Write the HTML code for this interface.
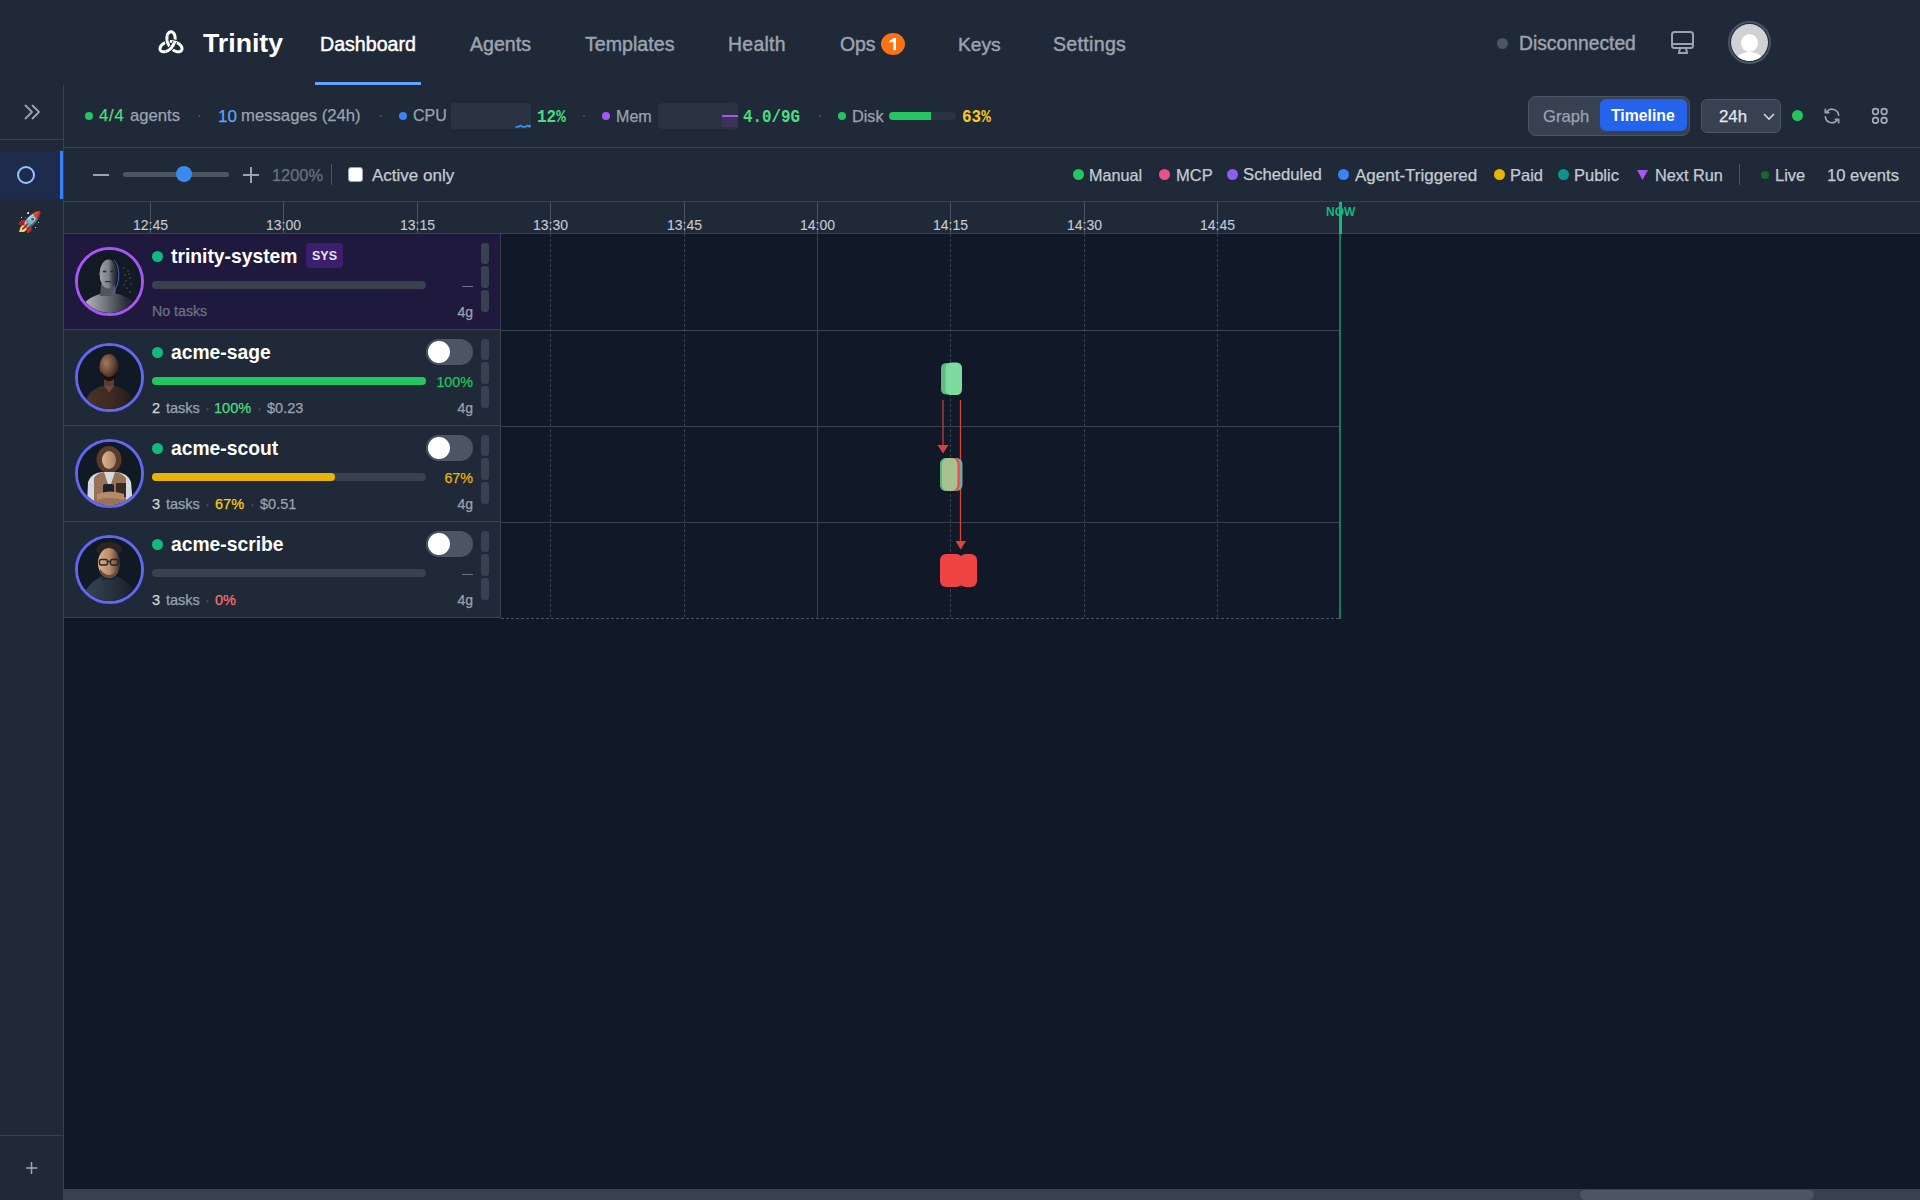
<!DOCTYPE html>
<html><head><meta charset="utf-8">
<style>
*{margin:0;padding:0;box-sizing:border-box}
html,body{width:1920px;height:1200px;overflow:hidden;background:#111827;font-family:"Liberation Sans",sans-serif;color:#d1d5db}
.a{position:absolute}
.t{position:absolute;white-space:nowrap;line-height:1;-webkit-text-stroke:0.25px currentColor}
.t[style*="font-weight:bold"]{-webkit-text-stroke:0}
.dot{position:absolute;border-radius:50%}
</style></head><body>

<!-- HEADER -->
<div class="a" style="left:0;top:0;width:1920px;height:85px;background:#1f2937"></div>
<!-- logo -->
<svg class="a" style="left:150px;top:26px" width="42" height="32" viewBox="0 0 42 32"><g fill="none" stroke-linejoin="round"><path d="M21.00 15.60 L21.68 15.61 L22.37 15.66 L23.04 15.73 L23.71 15.83 L24.37 15.96 L25.01 16.12 L25.64 16.31 L26.25 16.52 L26.84 16.76 L27.40 17.02 L27.94 17.30 L28.46 17.60 L28.94 17.93 L29.40 18.26 L29.82 18.62 L30.20 18.98 L30.56 19.36 L30.87 19.74 L31.15 20.13 L31.39 20.52 L31.59 20.92 L31.75 21.32 L31.87 21.71 L31.95 22.09 L31.99 22.47 L32.00 22.84 L31.96 23.20 L31.88 23.54 L31.76 23.87 L31.61 24.17 L31.42 24.46 L31.20 24.72 L30.94 24.96 L30.65 25.17 L30.33 25.35 L29.98 25.51 L29.61 25.63 L29.21 25.72 L28.78 25.78 L28.34 25.81 L27.88 25.80 L27.40 25.75 L26.91 25.67 L26.41 25.55 L25.90 25.40 L25.39 25.21 L24.87 24.98 L24.35 24.73 L23.83 24.43 L23.31 24.10 L22.80 23.74 L22.30 23.35 L21.82 22.93 L21.34 22.48 L20.88 22.00 L20.44 21.50 L20.01 20.97 L19.61 20.42 L19.23 19.86 L18.88 19.27 L18.55 18.67 L18.25 18.06 L17.97 17.44 L17.73 16.81 L17.51 16.17 L17.33 15.54 L17.18 14.90 L17.06 14.26 L16.97 13.64 L16.91 13.02 L16.88 12.41 L16.89 11.81 L16.92 11.23 L16.99 10.67 L17.08 10.13 L17.21 9.61 L17.36 9.12 L17.53 8.65 L17.73 8.21 L17.95 7.81 L18.19 7.44 L18.46 7.10 L18.73 6.80 L19.03 6.54 L19.34 6.31 L19.66 6.13 L19.98 5.98 L20.32 5.88 L20.66 5.81 L21.00 5.79 L21.34 5.81 L21.68 5.88 L22.02 5.98 L22.34 6.13 L22.66 6.31 L22.97 6.54 L23.27 6.80 L23.54 7.10 L23.81 7.44 L24.05 7.81 L24.27 8.21 L24.47 8.65 L24.64 9.12 L24.79 9.61 L24.92 10.13 L25.01 10.67 L25.08 11.23 L25.11 11.81 L25.12 12.41 L25.09 13.02 L25.03 13.64 L24.94 14.26 L24.82 14.90 L24.67 15.54 L24.49 16.17 L24.27 16.81 L24.03 17.44 L23.75 18.06 L23.45 18.67 L23.12 19.27 L22.77 19.86 L22.39 20.42 L21.99 20.97 L21.56 21.50 L21.12 22.00 L20.66 22.48 L20.18 22.93 L19.70 23.35 L19.20 23.74 L18.69 24.10 L18.17 24.43 L17.65 24.73 L17.13 24.98 L16.61 25.21 L16.10 25.40 L15.59 25.55 L15.09 25.67 L14.60 25.75 L14.12 25.80 L13.66 25.81 L13.22 25.78 L12.79 25.72 L12.39 25.63 L12.02 25.51 L11.67 25.35 L11.35 25.17 L11.06 24.96 L10.80 24.72 L10.58 24.46 L10.39 24.17 L10.24 23.87 L10.12 23.54 L10.04 23.20 L10.00 22.84 L10.01 22.47 L10.05 22.09 L10.13 21.71 L10.25 21.32 L10.41 20.92 L10.61 20.52 L10.85 20.13 L11.13 19.74 L11.44 19.36 L11.80 18.98 L12.18 18.62 L12.60 18.26 L13.06 17.93 L13.54 17.60 L14.06 17.30 L14.60 17.02 L15.16 16.76 L15.75 16.52 L16.36 16.31 L16.99 16.12 L17.63 15.96 L18.29 15.83 L18.96 15.73 L19.63 15.66 L20.32 15.61 L21.00 15.60 Z" stroke="#fff" stroke-width="3.0"/><path d="M17.15 16.08 L17.74 15.94 L18.35 15.82 L18.96 15.73 L19.58 15.66 L20.20 15.62 L20.83 15.60 L21.46 15.60 L22.08 15.63 L22.70 15.69 L23.32 15.77 L23.93 15.87 L24.53 16.00 L25.12 16.15 L25.69 16.33 L26.25 16.52 L26.79 16.74 L27.31 16.98 L27.81 17.23 L28.29 17.50 L28.74 17.79 L29.17 18.09 L29.58 18.41 L29.95 18.74 L30.30 19.07" stroke="#1f2937" stroke-width="5.0"/><path d="M17.15 16.08 L17.74 15.94 L18.35 15.82 L18.96 15.73 L19.58 15.66 L20.20 15.62 L20.83 15.60 L21.46 15.60 L22.08 15.63 L22.70 15.69 L23.32 15.77 L23.93 15.87 L24.53 16.00 L25.12 16.15 L25.69 16.33 L26.25 16.52 L26.79 16.74 L27.31 16.98 L27.81 17.23 L28.29 17.50 L28.74 17.79 L29.17 18.09 L29.58 18.41 L29.95 18.74 L30.30 19.07" stroke="#fff" stroke-width="3.0"/><path d="M21.22 22.36 L20.80 21.92 L20.40 21.46 L20.01 20.97 L19.64 20.47 L19.29 19.95 L18.96 19.42 L18.66 18.87 L18.37 18.32 L18.11 17.75 L17.87 17.18 L17.65 16.60 L17.47 16.01 L17.30 15.43 L17.17 14.85 L17.06 14.26 L16.97 13.69 L16.92 13.12 L16.89 12.56 L16.88 12.01 L16.91 11.47 L16.95 10.95 L17.03 10.44 L17.12 9.95 L17.24 9.48" stroke="#1f2937" stroke-width="5.0"/><path d="M21.22 22.36 L20.80 21.92 L20.40 21.46 L20.01 20.97 L19.64 20.47 L19.29 19.95 L18.96 19.42 L18.66 18.87 L18.37 18.32 L18.11 17.75 L17.87 17.18 L17.65 16.60 L17.47 16.01 L17.30 15.43 L17.17 14.85 L17.06 14.26 L16.97 13.69 L16.92 13.12 L16.89 12.56 L16.88 12.01 L16.91 11.47 L16.95 10.95 L17.03 10.44 L17.12 9.95 L17.24 9.48" stroke="#fff" stroke-width="3.0"/><path d="M24.63 15.69 L24.45 16.28 L24.25 16.86 L24.03 17.44 L23.78 18.01 L23.50 18.57 L23.21 19.12 L22.89 19.66 L22.55 20.19 L22.19 20.70 L21.81 21.19 L21.42 21.67 L21.01 22.12 L20.58 22.56 L20.14 22.97 L19.70 23.35 L19.24 23.71 L18.77 24.05 L18.30 24.35 L17.83 24.63 L17.35 24.88 L16.87 25.10 L16.40 25.29 L15.93 25.45 L15.46 25.58" stroke="#1f2937" stroke-width="5.0"/><path d="M24.63 15.69 L24.45 16.28 L24.25 16.86 L24.03 17.44 L23.78 18.01 L23.50 18.57 L23.21 19.12 L22.89 19.66 L22.55 20.19 L22.19 20.70 L21.81 21.19 L21.42 21.67 L21.01 22.12 L20.58 22.56 L20.14 22.97 L19.70 23.35 L19.24 23.71 L18.77 24.05 L18.30 24.35 L17.83 24.63 L17.35 24.88 L16.87 25.10 L16.40 25.29 L15.93 25.45 L15.46 25.58" stroke="#fff" stroke-width="3.0"/></g></svg>
<div class="t" style="left:203px;top:30px;font-size:26.7px;font-weight:bold;color:#fff">Trinity</div>

<div class="t" style="left:320px;top:34.6px;font-size:19.6px;color:#fff;-webkit-text-stroke:0.45px currentColor">Dashboard</div>
<div class="a" style="left:315px;top:82px;width:106px;height:3px;background:#60a5fa"></div>
<div class="t" style="left:470px;top:34.6px;font-size:19.6px;color:#9ca3af;-webkit-text-stroke:0.45px currentColor">Agents</div>
<div class="t" style="left:585px;top:34.6px;font-size:19.6px;letter-spacing:0.02px;color:#9ca3af;-webkit-text-stroke:0.45px currentColor">Templates</div>
<div class="t" style="left:728px;top:34.6px;font-size:19.4px;letter-spacing:0.3px;color:#9ca3af;-webkit-text-stroke:0.45px currentColor">Health</div>
<div class="t" style="left:840px;top:34.6px;font-size:19.4px;color:#9ca3af;-webkit-text-stroke:0.45px currentColor">Ops</div>
<div class="dot" style="left:881px;top:33px;width:24px;height:22px;background:#f97316"></div>
<svg class="a" style="left:881px;top:33px" width="24" height="22" viewBox="0 0 24 22"><path d="M12.2 5 L14.9 5 L14.9 17.2 L12.3 17.2 L12.3 8.2 Q10.8 9.3 8.6 9.6 L8.6 7.6 Q11 7 12.2 5 Z" fill="#fff"/></svg>
<div class="t" style="left:958px;top:34.6px;font-size:19.2px;color:#9ca3af;-webkit-text-stroke:0.45px currentColor">Keys</div>
<div class="t" style="left:1053px;top:34.6px;font-size:19.6px;letter-spacing:0.3px;color:#9ca3af;-webkit-text-stroke:0.45px currentColor">Settings</div>

<div class="dot" style="left:1497px;top:38px;width:11px;height:11px;background:#4b5563"></div>
<div class="t" style="left:1519px;top:34px;font-size:19.3px;color:#9ca3af;-webkit-text-stroke:0.45px currentColor">Disconnected</div>
<svg class="a" style="left:1670px;top:30px" width="26" height="26" viewBox="0 0 26 26">
  <g fill="none" stroke="#9ca3af" stroke-width="2" stroke-linejoin="round">
    <rect x="2" y="2" width="21" height="16" rx="2.5"/>
    <line x1="2" y1="14" x2="23" y2="14"/>
    <path d="M10 18 L9 23 M16 18 L17 23 M8 23 H18"/>
  </g>
</svg>
<div class="dot" style="left:1728px;top:21px;width:43px;height:43px;border:2px solid #4b5563;background:#1f2937"></div>
<div class="dot" style="left:1731px;top:24px;width:37px;height:37px;background:#cfd1d4;overflow:hidden">
  <div class="dot" style="left:10px;top:10px;width:17px;height:18px;background:#fff"></div>
  <div class="dot" style="left:3px;top:28px;width:31px;height:24px;background:#fff"></div>
</div>

<!-- SIDEBAR -->
<div class="a" style="left:0;top:85px;width:63px;height:1115px;background:#1f2937"></div>
<div class="a" style="left:63px;top:85px;width:1px;height:1115px;background:#374151"></div>
<svg class="a" style="left:22px;top:102px" width="20" height="20" viewBox="0 0 20 20">
  <g fill="none" stroke="#9ca3af" stroke-width="1.8" stroke-linecap="round" stroke-linejoin="round"><path d="M3.5 3.5 L10 10 L3.5 16.5 M10.5 3.5 L17 10 L10.5 16.5"/></g>
</svg>
<div class="a" style="left:0;top:139px;width:63px;height:1px;background:#374151"></div>
<div class="a" style="left:0;top:151px;width:63px;height:48px;background:#1e2b4d"></div>
<div class="a" style="left:60px;top:151px;width:3px;height:48px;background:#3b82f6"></div>
<div class="dot" style="left:17px;top:166px;width:18px;height:18px;border:2px solid #93c5fd"></div>
<div class="t" style="left:17px;top:212px;font-size:20px">🚀</div>
<div class="a" style="left:0;top:1135px;width:63px;height:1px;background:#374151"></div>
<svg class="a" style="left:24px;top:1160px" width="16" height="16" viewBox="0 0 16 16">
  <g stroke="#9ca3af" stroke-width="1.6"><line x1="7.5" y1="2" x2="7.5" y2="14"/><line x1="2" y1="8" x2="13.5" y2="8"/></g>
</svg>

<!-- STATS BAR -->
<div class="a" style="left:64px;top:85px;width:1856px;height:62px;background:#1f2937"></div>
<div class="a" style="left:64px;top:147px;width:1856px;height:1px;background:#374151"></div>
<div class="dot" style="left:85px;top:112px;width:8px;height:8px;background:#22c55e"></div>
<div class="t" style="left:99px;top:108px;font-size:16.6px;letter-spacing:0.8px;color:#4ade80">4/4</div>
<div class="t" style="left:130px;top:108px;font-size:16.7px;color:#9ca3af">agents</div>
<div class="dot" style="left:198px;top:115px;width:2px;height:2px;background:#4b5563"></div>
<div class="t" style="left:218px;top:108px;font-size:17px;color:#60a5fa">10</div>
<div class="t" style="left:241px;top:108px;font-size:16.7px;color:#9ca3af">messages (24h)</div>
<div class="dot" style="left:380px;top:115px;width:2px;height:2px;background:#4b5563"></div>
<div class="dot" style="left:399px;top:112px;width:8px;height:8px;background:#3b82f6"></div>
<div class="t" style="left:413px;top:108px;font-size:16px;color:#9ca3af">CPU</div>
<div class="a" style="left:451px;top:103px;width:80px;height:26px;border-radius:3px;background:#2a3342"></div>
<svg class="a" style="left:514px;top:121px" width="18" height="8" viewBox="0 0 18 8"><path d="M1.5 5.8 L4.5 5.8 L6.5 4.6 L8.5 5.8 L11.5 5.8 L13.5 4.6 L15.5 5.8 L16.5 3.8" fill="none" stroke="#3b8bf6" stroke-width="1.8" stroke-linejoin="round"/></svg>
<div class="t" style="left:537px;top:108px;font-family:'Liberation Mono',monospace;font-size:19px;transform:scaleX(0.84);transform-origin:0 0;font-weight:bold;color:#4ade80">12%</div>
<div class="dot" style="left:583px;top:115px;width:2px;height:2px;background:#4b5563"></div>
<div class="dot" style="left:602px;top:112px;width:8px;height:8px;background:#a855f7"></div>
<div class="t" style="left:616px;top:108px;font-size:16.1px;color:#9ca3af">Mem</div>
<div class="a" style="left:658px;top:103px;width:80px;height:26px;border-radius:3px;background:#2a3342"></div>
<div class="a" style="left:722px;top:115px;width:16px;height:2px;background:#a855f7"></div>
<div class="a" style="left:722px;top:117px;width:16px;height:10px;background:#3a3557"></div>
<div class="t" style="left:743px;top:108px;font-family:'Liberation Mono',monospace;font-size:19px;transform:scaleX(0.835);transform-origin:0 0;font-weight:bold;color:#4ade80">4.0/9G</div>
<div class="dot" style="left:819px;top:115px;width:2px;height:2px;background:#4b5563"></div>
<div class="dot" style="left:838px;top:112px;width:8px;height:8px;background:#22c55e"></div>
<div class="t" style="left:852px;top:108px;font-size:16.3px;color:#9ca3af">Disk</div>
<div class="a" style="left:889px;top:112px;width:67px;height:8px;border-radius:4px;background:#2a3342"></div>
<div class="a" style="left:889px;top:112px;width:42px;height:8px;border-radius:4px 0 0 4px;background:#22c55e"></div>
<div class="t" style="left:962px;top:108px;font-family:'Liberation Mono',monospace;font-size:19px;transform:scaleX(0.84);transform-origin:0 0;font-weight:bold;color:#facc15">63%</div>

<!-- view toggle -->
<div class="a" style="left:1528px;top:96px;width:162px;height:40px;border-radius:8px;background:#374151;border:1px solid #4b5563"></div>
<div class="t" style="left:1543px;top:109px;font-size:16.6px;color:#9ca3af">Graph</div>
<div class="a" style="left:1600px;top:99px;width:87px;height:32px;border-radius:6px;background:#2563eb"></div>
<div class="t" style="left:1611px;top:108px;font-size:15.8px;font-weight:bold;color:#fff">Timeline</div>
<div class="a" style="left:1701px;top:99px;width:80px;height:34px;border-radius:6px;background:#374151;border:1px solid #4b5563"></div>
<div class="t" style="left:1719px;top:109px;font-size:16.8px;color:#e5e7eb">24h</div>
<svg class="a" style="left:1762px;top:111px" width="14" height="10" viewBox="0 0 14 10"><path d="M2 3 L7 8 L12 3" fill="none" stroke="#d1d5db" stroke-width="1.6"/></svg>
<div class="dot" style="left:1792px;top:110px;width:11px;height:11px;background:#22c55e"></div>
<svg class="a" style="left:1822px;top:106px" width="20" height="20" viewBox="0 0 24 24"><g fill="none" stroke="#9ca3af" stroke-width="2" stroke-linecap="round" stroke-linejoin="round"><path d="M20 11A8 8 0 0 0 5.6 7.2M4 4v4h4"/><path d="M4 13a8 8 0 0 0 14.4 3.8M20 20v-4h-4"/></g></svg>
<svg class="a" style="left:1871px;top:107px" width="18" height="18" viewBox="0 0 18 18"><g fill="none" stroke="#a5abb5" stroke-width="1.7"><rect x="1.7" y="1.7" width="5.6" height="5.6" rx="2.6"/><rect x="10.3" y="1.7" width="5.6" height="5.6" rx="2.6"/><rect x="1.7" y="10.6" width="5.6" height="5.6" rx="2.6"/><rect x="10.3" y="10.6" width="5.6" height="5.6" rx="2.6"/></g></svg>

<!-- TOOLBAR -->
<div class="a" style="left:64px;top:148px;width:1856px;height:53px;background:#1f2937"></div>
<div class="a" style="left:64px;top:201px;width:1856px;height:1px;background:#374151"></div>
<div class="a" style="left:93px;top:174px;width:16px;height:2px;background:#9ca3af"></div>
<div class="a" style="left:123px;top:172px;width:106px;height:5px;border-radius:3px;background:#4b5563"></div>
<div class="dot" style="left:176px;top:166px;width:16px;height:16px;background:#3a8bef"></div>
<div class="a" style="left:243px;top:174px;width:16px;height:2px;background:#9ca3af"></div>
<div class="a" style="left:250px;top:167px;width:2px;height:16px;background:#9ca3af"></div>
<div class="t" style="left:272px;top:167px;font-size:16.4px;color:#6b7280">1200%</div>
<div class="a" style="left:331px;top:164px;width:1px;height:21px;background:#4b5563"></div>
<div class="a" style="left:348px;top:167px;width:15px;height:15px;border-radius:3px;background:#fff;border:1px solid #9ca3af"></div>
<div class="t" style="left:372px;top:167px;font-size:17px;color:#c6cbd2">Active only</div>

<div class="dot" style="left:1073px;top:169px;width:11px;height:11px;background:#22c55e"></div>
<div class="t" style="left:1089px;top:167px;font-size:16.2px;color:#c6cbd2">Manual</div>
<div class="dot" style="left:1159px;top:169px;width:11px;height:11px;background:#ec5088"></div>
<div class="t" style="left:1176px;top:167px;font-size:16.5px;color:#c6cbd2">MCP</div>
<div class="dot" style="left:1227px;top:169px;width:11px;height:11px;background:#8b5cf6"></div>
<div class="t" style="left:1243px;top:167px;font-size:16.7px;color:#c6cbd2">Scheduled</div>
<div class="dot" style="left:1338px;top:169px;width:11px;height:11px;background:#3b82f6"></div>
<div class="t" style="left:1355px;top:167px;font-size:17px;color:#c6cbd2">Agent-Triggered</div>
<div class="dot" style="left:1494px;top:169px;width:11px;height:11px;background:#eab308"></div>
<div class="t" style="left:1510px;top:167px;font-size:16.5px;color:#c6cbd2">Paid</div>
<div class="dot" style="left:1558px;top:169px;width:11px;height:11px;background:#0d9488"></div>
<div class="t" style="left:1574px;top:167px;font-size:16.5px;color:#c6cbd2">Public</div>
<svg class="a" style="left:1637px;top:170px" width="11" height="10" viewBox="0 0 11 10"><path d="M0 0 H11 L5.5 10 Z" fill="#a855f7"/></svg>
<div class="t" style="left:1655px;top:167px;font-size:16.3px;color:#c6cbd2">Next Run</div>
<div class="a" style="left:1739px;top:164px;width:1px;height:21px;background:#4b5563"></div>
<div class="dot" style="left:1761px;top:171px;width:8px;height:8px;background:#166534"></div>
<div class="t" style="left:1775px;top:167px;font-size:16.5px;color:#c6cbd2">Live</div>
<div class="t" style="left:1827px;top:168px;font-size:16.6px;color:#c6cbd2">10 events</div>

<!-- TIMELINE HEADER -->
<div class="a" style="left:64px;top:202px;width:1856px;height:31px;background:#1f2937"></div>
<div class="a" style="left:64px;top:233px;width:1856px;height:1px;background:#374151"></div>
<div class="a" style="left:150px;top:202px;width:1px;height:31px;background:#4b5563"></div>
<div class="t" style="left:110px;top:218px;width:81px;text-align:center;font-size:14px;color:#c6cad1;-webkit-text-stroke:0.1px currentColor">12:45</div>
<div class="a" style="left:283px;top:202px;width:1px;height:31px;background:#4b5563"></div>
<div class="t" style="left:243px;top:218px;width:81px;text-align:center;font-size:14px;color:#c6cad1;-webkit-text-stroke:0.1px currentColor">13:00</div>
<div class="a" style="left:417px;top:202px;width:1px;height:31px;background:#4b5563"></div>
<div class="t" style="left:377px;top:218px;width:81px;text-align:center;font-size:14px;color:#c6cad1;-webkit-text-stroke:0.1px currentColor">13:15</div>
<div class="a" style="left:550px;top:202px;width:1px;height:31px;background:#4b5563"></div>
<div class="t" style="left:510px;top:218px;width:81px;text-align:center;font-size:14px;color:#c6cad1;-webkit-text-stroke:0.1px currentColor">13:30</div>
<div class="a" style="left:684px;top:202px;width:1px;height:31px;background:#4b5563"></div>
<div class="t" style="left:644px;top:218px;width:81px;text-align:center;font-size:14px;color:#c6cad1;-webkit-text-stroke:0.1px currentColor">13:45</div>
<div class="a" style="left:817px;top:202px;width:1px;height:31px;background:#4b5563"></div>
<div class="t" style="left:777px;top:218px;width:81px;text-align:center;font-size:14px;color:#c6cad1;-webkit-text-stroke:0.1px currentColor">14:00</div>
<div class="a" style="left:950px;top:202px;width:1px;height:31px;background:#4b5563"></div>
<div class="t" style="left:910px;top:218px;width:81px;text-align:center;font-size:14px;color:#c6cad1;-webkit-text-stroke:0.1px currentColor">14:15</div>
<div class="a" style="left:1084px;top:202px;width:1px;height:31px;background:#4b5563"></div>
<div class="t" style="left:1044px;top:218px;width:81px;text-align:center;font-size:14px;color:#c6cad1;-webkit-text-stroke:0.1px currentColor">14:30</div>
<div class="a" style="left:1217px;top:202px;width:1px;height:31px;background:#4b5563"></div>
<div class="t" style="left:1177px;top:218px;width:81px;text-align:center;font-size:14px;color:#c6cad1;-webkit-text-stroke:0.1px currentColor">14:45</div>
<div class="a" style="left:1339px;top:202px;width:3px;height:32px;background:#10b981"></div>
<div class="t" style="left:1326px;top:206px;font-size:12px;font-weight:bold;color:#10b981">NOW</div>
<!--GRID-->
<div class="a" style="left:500px;top:234px;width:1px;height:384px;background:#374151"></div>
<div class="a" style="left:64px;top:234px;width:436px;height:95px;background:#1f1a3d"></div>
<div class="a" style="left:64px;top:329px;width:436px;height:1px;background:#374151"></div>
<div class="a" style="left:501px;top:330px;width:839px;height:1px;background:#374151"></div>
<div class="dot av0" style="left:75px;top:247px;width:69px;height:69px;border:3px solid #a855f7;background:#131b28;overflow:hidden"><svg width="63" height="63" viewBox="0 0 63 63"><defs><linearGradient id="g0" x1="0" x2="1"><stop offset="0" stop-color="#9ea3ab"/><stop offset="0.5" stop-color="#7d828b"/><stop offset="0.75" stop-color="#3a3f48"/><stop offset="1" stop-color="#1a1e26"/></linearGradient><linearGradient id="g0b" x1="0" x2="1"><stop offset="0" stop-color="#c2c6cc"/><stop offset="0.45" stop-color="#6f747d"/><stop offset="0.8" stop-color="#2a2e36"/><stop offset="1" stop-color="#1a1e26"/></linearGradient></defs>
<rect width="63" height="63" fill="#121a26"/>
<path d="M2 63 C4 52 12 47 22 44 L40 44 C50 47 58 52 60 63 Z" fill="url(#g0b)"/>
<path d="M23 34 L37 34 L38 46 L22 46 Z" fill="#50555e"/>
<ellipse cx="30.5" cy="24" rx="9" ry="14.5" fill="url(#g0)"/>
<g fill="#2b2f38"><ellipse cx="26.5" cy="21.5" rx="2" ry="0.9"/><ellipse cx="34" cy="21.5" rx="2" ry="0.9"/><rect x="27" y="31" width="6" height="1.2"/></g>
<path d="M36 10 Q42 16 40.5 30 Q38 41 33 45" fill="none" stroke="#5566cc" stroke-width="0.9"/>
<g fill="#8a5a3a"><circle cx="46" cy="18" r="0.7"/><circle cx="50" cy="21" r="0.7"/><circle cx="47" cy="25" r="0.7"/><circle cx="52" cy="28" r="0.7"/><circle cx="48" cy="31" r="0.7"/><circle cx="53" cy="34" r="0.7"/><circle cx="49" cy="38" r="0.7"/><circle cx="52" cy="42" r="0.7"/><circle cx="46" cy="35" r="0.7"/><circle cx="51" cy="24" r="0.7"/></g>
</svg></div>
<div class="dot" style="left:152px;top:251px;width:11px;height:11px;background:#10b981"></div>
<div class="t" style="left:171px;top:247px;font-size:19.3px;font-weight:bold;color:#fff">trinity-system</div>
<div class="a" style="left:306px;top:243px;width:37px;height:25px;border-radius:4px;background:#3b1f6e"></div>
<div class="t" style="left:306px;top:250px;width:37px;text-align:center;font-size:12.5px;font-weight:bold;color:#e5e7eb">SYS</div>
<div class="a" style="left:152px;top:281px;width:274px;height:8px;border-radius:4px;background:#374151"></div>
<div class="a" style="left:462px;top:286px;width:11px;height:1px;background:#6b7280"></div>
<div class="t" style="left:152px;top:304px;font-size:14.2px;color:#6b7280">No tasks</div>
<div class="t" style="left:373px;top:305px;width:100px;text-align:right;font-size:14px;color:#9ca3af">4g</div>
<div class="a" style="left:481px;top:243px;width:8px;height:21px;border-radius:3px;background:#374151"></div>
<div class="a" style="left:481px;top:266px;width:8px;height:22px;border-radius:3px;background:#374151"></div>
<div class="a" style="left:481px;top:290px;width:8px;height:22px;border-radius:3px;background:#374151"></div>
<div class="a" style="left:64px;top:330px;width:436px;height:95px;background:#1f2937"></div>
<div class="a" style="left:64px;top:425px;width:436px;height:1px;background:#374151"></div>
<div class="a" style="left:501px;top:426px;width:839px;height:1px;background:#374151"></div>
<div class="dot av1" style="left:75px;top:343px;width:69px;height:69px;border:3px solid #6366f1;background:#131b28;overflow:hidden"><svg width="63" height="63" viewBox="0 0 63 63"><defs><radialGradient id="g1" cx="0.35" cy="0.35" r="0.75"><stop offset="0" stop-color="#a37a60"/><stop offset="0.5" stop-color="#6a4a3a"/><stop offset="1" stop-color="#241814"/></radialGradient><linearGradient id="g1b" x1="0" x2="1"><stop offset="0" stop-color="#4a342c"/><stop offset="0.6" stop-color="#3a2822"/><stop offset="1" stop-color="#1e1816"/></linearGradient></defs>
<rect width="63" height="63" fill="#111925"/>
<path d="M6 63 C7 50 13 44 24 40 L38 40 C49 44 56 50 58 63 Z" fill="url(#g1b)"/>
<rect x="26" y="32" width="10" height="9" fill="#5a3e30"/>
<path d="M26 40 L31 47 L36 40 Z" fill="#6a4a3a"/>
<ellipse cx="31" cy="21" rx="9.5" ry="13" fill="url(#g1)"/>
<path d="M22.5 25 Q31 37 39.5 25 L39 30 Q31 40 23 30 Z" fill="#1a1210"/>
</svg></div>
<div class="dot" style="left:152px;top:347px;width:11px;height:11px;background:#10b981"></div>
<div class="t" style="left:171px;top:343px;font-size:19.3px;font-weight:bold;color:#fff">acme-sage</div>
<div class="a" style="left:426px;top:339px;width:47px;height:26px;border-radius:13px;background:#4b5563"></div>
<div class="dot" style="left:428px;top:341px;width:22px;height:22px;background:#fff"></div>
<div class="a" style="left:152px;top:377px;width:274px;height:8px;border-radius:4px;background:#374151"></div>
<div class="a" style="left:152px;top:377px;width:274px;height:8px;border-radius:4px;background:#22c55e"></div>
<div class="t" style="left:373px;top:375px;width:100px;text-align:right;font-size:14.3px;color:#22c55e">100%</div>
<div class="t" style="left:152px;top:401px;font-size:14.5px;color:#d1d5db">2</div>
<div class="t" style="left:166px;top:401px;font-size:14.5px;color:#9ca3af">tasks</div>
<div class="t" style="left:205px;top:401px;font-size:14.5px;color:#4b5563">·</div>
<div class="t" style="left:214px;top:401px;font-size:14.5px;color:#4ade80">100%</div>
<div class="t" style="left:257px;top:401px;font-size:14.5px;color:#4b5563">·</div>
<div class="t" style="left:267px;top:401px;font-size:14.5px;color:#9ca3af">$0.23</div>
<div class="t" style="left:373px;top:401px;width:100px;text-align:right;font-size:14px;color:#9ca3af">4g</div>
<div class="a" style="left:481px;top:339px;width:8px;height:21px;border-radius:3px;background:#374151"></div>
<div class="a" style="left:481px;top:362px;width:8px;height:22px;border-radius:3px;background:#374151"></div>
<div class="a" style="left:481px;top:386px;width:8px;height:22px;border-radius:3px;background:#374151"></div>
<div class="a" style="left:64px;top:426px;width:436px;height:95px;background:#1f2937"></div>
<div class="a" style="left:64px;top:521px;width:436px;height:1px;background:#374151"></div>
<div class="a" style="left:501px;top:522px;width:839px;height:1px;background:#374151"></div>
<div class="dot av2" style="left:75px;top:439px;width:69px;height:69px;border:3px solid #6366f1;background:#131b28;overflow:hidden"><svg width="63" height="63" viewBox="0 0 63 63"><defs><linearGradient id="g2" x1="0" x2="1"><stop offset="0" stop-color="#dcb494"/><stop offset="1" stop-color="#a98064"/></linearGradient></defs>
<rect width="63" height="63" fill="#111925"/>
<ellipse cx="31" cy="17.5" rx="12.5" ry="13.5" fill="#5a3a28"/>
<path d="M9 63 L10 40 Q13 31 24 30 L38 30 Q50 31 53 40 L55 63 Z" fill="#d5dae0"/>
<path d="M16 63 L16 36 Q19 31 26 30 L30 42 L33 42 L37 30 Q44 31 48 36 L48 63 Z" fill="#987256"/>
<rect x="25" y="42" width="11" height="12" rx="2" fill="#1c232c"/>
<rect x="38" y="41" width="10" height="14" fill="#3a2a22"/>
<path d="M19 52 Q32 47 46 52 L46 58 Q32 54 19 58 Z" fill="#b78a6a"/>
<ellipse cx="31" cy="18" rx="7" ry="9" fill="url(#g2)"/>
</svg></div>
<div class="dot" style="left:152px;top:443px;width:11px;height:11px;background:#10b981"></div>
<div class="t" style="left:171px;top:439px;font-size:19.3px;font-weight:bold;color:#fff">acme-scout</div>
<div class="a" style="left:426px;top:435px;width:47px;height:26px;border-radius:13px;background:#4b5563"></div>
<div class="dot" style="left:428px;top:437px;width:22px;height:22px;background:#fff"></div>
<div class="a" style="left:152px;top:473px;width:274px;height:8px;border-radius:4px;background:#374151"></div>
<div class="a" style="left:152px;top:473px;width:183px;height:8px;border-radius:4px;background:#eab308"></div>
<div class="t" style="left:373px;top:471px;width:100px;text-align:right;font-size:14.3px;color:#eab308">67%</div>
<div class="t" style="left:152px;top:497px;font-size:14.5px;color:#d1d5db">3</div>
<div class="t" style="left:166px;top:497px;font-size:14.5px;color:#9ca3af">tasks</div>
<div class="t" style="left:205px;top:497px;font-size:14.5px;color:#4b5563">·</div>
<div class="t" style="left:215px;top:497px;font-size:14.5px;color:#facc15">67%</div>
<div class="t" style="left:250px;top:497px;font-size:14.5px;color:#4b5563">·</div>
<div class="t" style="left:260px;top:497px;font-size:14.5px;color:#9ca3af">$0.51</div>
<div class="t" style="left:373px;top:497px;width:100px;text-align:right;font-size:14px;color:#9ca3af">4g</div>
<div class="a" style="left:481px;top:435px;width:8px;height:21px;border-radius:3px;background:#374151"></div>
<div class="a" style="left:481px;top:458px;width:8px;height:22px;border-radius:3px;background:#374151"></div>
<div class="a" style="left:481px;top:482px;width:8px;height:22px;border-radius:3px;background:#374151"></div>
<div class="a" style="left:64px;top:522px;width:436px;height:95px;background:#1f2937"></div>
<div class="a" style="left:64px;top:617px;width:436px;height:1px;background:#374151"></div>
<div class="a" style="left:501px;top:618px;width:839px;height:1px;background:repeating-linear-gradient(to right,#4b5563 0 3px,transparent 3px 5px)"></div>
<div class="dot av3" style="left:75px;top:535px;width:69px;height:69px;border:3px solid #6366f1;background:#131b28;overflow:hidden"><svg width="63" height="63" viewBox="0 0 63 63"><defs><linearGradient id="g3" x1="0" x2="1"><stop offset="0" stop-color="#ddb090"/><stop offset="0.55" stop-color="#b8896a"/><stop offset="1" stop-color="#3e2e28"/></linearGradient><linearGradient id="g3b" x1="0" x2="1"><stop offset="0" stop-color="#3a4654"/><stop offset="0.6" stop-color="#26303c"/><stop offset="1" stop-color="#151b24"/></linearGradient></defs>
<rect width="63" height="63" fill="#111925"/>
<path d="M4 63 C6 50 14 44 24 38 L38 38 C50 44 57 50 59 63 Z" fill="url(#g3b)"/>
<rect x="24" y="34" width="14" height="8" fill="#1f2834"/>
<ellipse cx="31" cy="11" rx="12.5" ry="7" fill="#2e2420"/>
<ellipse cx="31" cy="25" rx="11" ry="15" fill="url(#g3)"/>
<path d="M20 14 Q31 6 42 14 L42 12 Q31 3 20 12 Z" fill="#2e2420"/>
<g fill="none" stroke="#26262a" stroke-width="1.4"><rect x="21.5" y="21.5" width="8" height="5.5" rx="2"/><rect x="32.5" y="21.5" width="8" height="5.5" rx="2"/><line x1="29.5" y1="23.5" x2="32.5" y2="23.5"/></g>
<path d="M22 31 Q31 43 40 31 L40 35 Q31 45 22 35 Z" fill="#6a4a38"/>
</svg></div>
<div class="dot" style="left:152px;top:539px;width:11px;height:11px;background:#10b981"></div>
<div class="t" style="left:171px;top:535px;font-size:19.3px;font-weight:bold;color:#fff">acme-scribe</div>
<div class="a" style="left:426px;top:531px;width:47px;height:26px;border-radius:13px;background:#4b5563"></div>
<div class="dot" style="left:428px;top:533px;width:22px;height:22px;background:#fff"></div>
<div class="a" style="left:152px;top:569px;width:274px;height:8px;border-radius:4px;background:#374151"></div>
<div class="a" style="left:462px;top:574px;width:11px;height:1px;background:#6b7280"></div>
<div class="t" style="left:152px;top:593px;font-size:14.5px;color:#d1d5db">3</div>
<div class="t" style="left:166px;top:593px;font-size:14.5px;color:#9ca3af">tasks</div>
<div class="t" style="left:205px;top:593px;font-size:14.5px;color:#4b5563">·</div>
<div class="t" style="left:215px;top:593px;font-size:14.5px;color:#f87171">0%</div>
<div class="t" style="left:373px;top:593px;width:100px;text-align:right;font-size:14px;color:#9ca3af">4g</div>
<div class="a" style="left:481px;top:531px;width:8px;height:21px;border-radius:3px;background:#374151"></div>
<div class="a" style="left:481px;top:554px;width:8px;height:22px;border-radius:3px;background:#374151"></div>
<div class="a" style="left:481px;top:578px;width:8px;height:22px;border-radius:3px;background:#374151"></div>
<div class="a" style="left:550px;top:234px;width:1px;height:384px;background:repeating-linear-gradient(to bottom,#374151 0 3px,transparent 3px 5px)"></div>
<div class="a" style="left:684px;top:234px;width:1px;height:384px;background:repeating-linear-gradient(to bottom,#374151 0 3px,transparent 3px 5px)"></div>
<div class="a" style="left:817px;top:234px;width:1px;height:384px;background:#374151"></div>
<div class="a" style="left:950px;top:234px;width:1px;height:384px;background:repeating-linear-gradient(to bottom,#374151 0 3px,transparent 3px 5px)"></div>
<div class="a" style="left:1084px;top:234px;width:1px;height:384px;background:repeating-linear-gradient(to bottom,#374151 0 3px,transparent 3px 5px)"></div>
<div class="a" style="left:1217px;top:234px;width:1px;height:384px;background:repeating-linear-gradient(to bottom,#374151 0 3px,transparent 3px 5px)"></div>
<div class="a" style="left:1339px;top:234px;width:2px;height:385px;background:#197a57"></div>
<!--EVENTS-->
<svg class="a" style="left:900px;top:340px" width="100" height="270" viewBox="900 340 100 270">
  <!-- sage row blocks -->
  <rect x="940.5" y="362.5" width="21" height="32.5" rx="5.5" fill="#5dba84" stroke="#0b0f1a" stroke-width="1"/>
  <rect x="945.5" y="362.5" width="16.5" height="32.5" rx="5.5" fill="#7edb9e"/>
  <!-- arrows -->
  <line x1="943" y1="400" x2="943" y2="447" stroke="#c2413a" stroke-width="1.3"/>
  <path d="M937.5 445 L948.5 445 L943 453.5 Z" fill="#dc3f3f"/>
  <line x1="960.5" y1="400" x2="960.5" y2="543" stroke="#d9443d" stroke-width="1.3"/>
  <path d="M955.5 541 L966 541 L960.7 549.5 Z" fill="#dc4444"/>
  <!-- scout row block -->
  <rect x="940" y="458" width="22.5" height="33" rx="6" fill="#8d9aab"/>
  <rect x="940" y="458" width="20.5" height="33" rx="6" fill="#52b87c"/>
  <rect x="944" y="458" width="15.5" height="33" rx="6" fill="#ef4444"/>
  <rect x="942" y="458" width="15.5" height="33" rx="6" fill="#a8c190"/>
  <!-- scribe row blocks -->
  <rect x="940" y="554" width="22.5" height="33" rx="6" fill="#ef4444"/>
  <rect x="959.5" y="554" width="17.5" height="33" rx="6" fill="#ef4444"/>
</svg>

<!-- SCROLLBAR -->
<div class="a" style="left:64px;top:1189px;width:1856px;height:11px;background:#374151"></div>
<div class="a" style="left:1580px;top:1190px;width:234px;height:10px;border-radius:5px;background:#4b5563"></div>

</body></html>
